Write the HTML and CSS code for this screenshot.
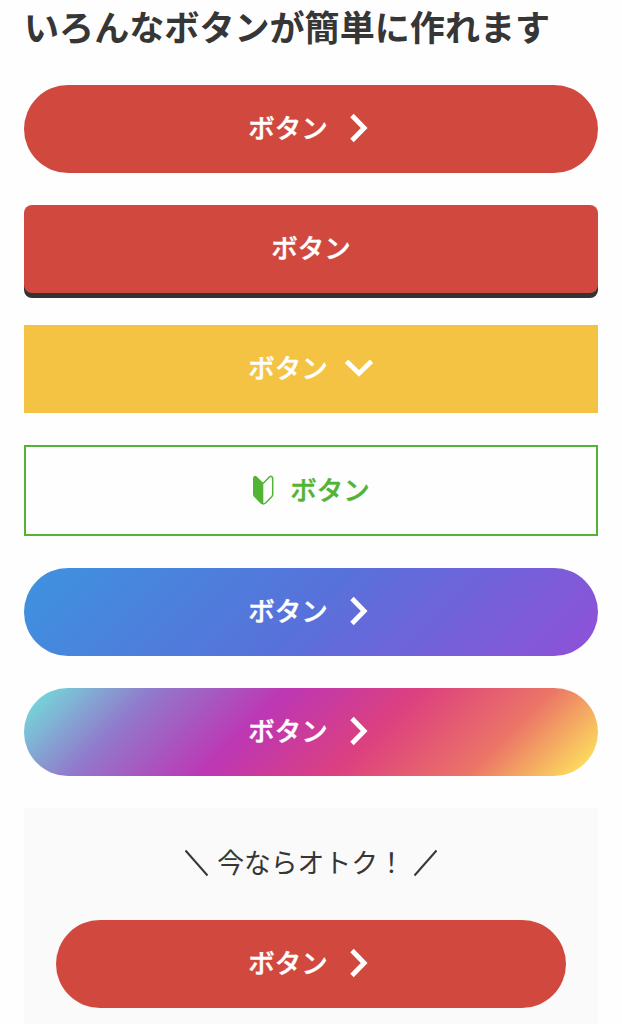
FILE: index.html
```
<!DOCTYPE html>
<html lang="ja">
<head>
    <meta charset="UTF-8">
    <meta name="viewport" content="width=device-width, initial-scale=1.0">
    <title>ボタン</title>
    <link rel="stylesheet" href="styles.css">
</head>
<body>
    <h1>いろんなボタンが簡単に作れます</h1>
    <div class="button-list">
        <a class="btn btn-red btn-round" href="#">
            <span>ボタン</span>
            <svg class="arrow" viewBox="0 0 30 30"><path d="M8 2.5 20.2 15 8 27.5"/></svg>
        </a>
        <a class="btn btn-red btn-solid" href="#"><span>ボタン</span></a>
        <a class="btn btn-yellow" href="#">
            <span>ボタン</span>
            <svg class="arrow" viewBox="0 0 30 30"><path d="M2.5 8.3 15 20.5 27.5 8.3"/></svg>
        </a>
        <a class="btn btn-outline" href="#">
            <svg class="beginner" viewBox="0 0 22 30">
                <path class="leaf" d="M11.3 8 5 1.8Q3.4.3 2 1.2 1 1.9 1 3.5V19.5Q1 20.6 1.8 21.5L8.6 28.5Q9.6 29.5 11.3 29.5Z"/>
                <path class="leaf-line" d="M11 8.5 17.4 2Q18.8.8 20 1.8 20.7 2.4 20.7 3.6V19.5Q20.7 20.6 19.9 21.5L13.6 28Q12.6 28.9 11 28.9"/>
            </svg>
            <span>ボタン</span>
        </a>
        <a class="btn btn-blue btn-round" href="#">
            <span>ボタン</span>
            <svg class="arrow" viewBox="0 0 30 30"><path d="M8 2.5 20.2 15 8 27.5"/></svg>
        </a>
        <a class="btn btn-rainbow btn-round" href="#">
            <span>ボタン</span>
            <svg class="arrow" viewBox="0 0 30 30"><path d="M8 2.5 20.2 15 8 27.5"/></svg>
        </a>
        <div class="box">
            <p class="micro-copy">
                <svg class="slash" viewBox="0 0 24 28"><path d="M.5 1.5 22.5 26.5"/></svg>
                <span>今ならオトク！</span>
                <svg class="slash" viewBox="0 0 24 28"><path d="M23.5 1.5 1.5 26.5"/></svg>
            </p>
            <a class="btn btn-red btn-round" href="#">
                <span>ボタン</span>
                <svg class="arrow" viewBox="0 0 30 30"><path d="M8 2.5 20.2 15 8 27.5"/></svg>
            </a>
        </div>
    </div>
</body>
</html>
```
FILE: styles.css
```
* {
    box-sizing: border-box;
}

body {
    font-family: "Noto Sans CJK JP", sans-serif;
    background: #fefefe;
    color: #363636;
    margin: 0;
    padding: 0 24px;
    height: 1024px;
    overflow: hidden;
}

h1 {
    font-size: 35.1px;
    font-weight: 700;
    line-height: 52px;
    margin: 0 0 33px;
    white-space: nowrap;
}

.button-list {
    display: flex;
    flex-direction: column;
    gap: 32px;
}

.btn {
    display: flex;
    align-items: center;
    justify-content: center;
    height: 88px;
    padding-bottom: 2px;
    color: #fff;
    font-size: 26.5px;
    font-weight: 500;
    line-height: 40px;
    text-decoration: none;
    -webkit-text-stroke: 0.4px currentColor;
}

.btn span {
    padding-bottom: 2px;
}

.btn-round {
    border-radius: 44px;
}

.btn-red {
    background: #d1493e;
}

.btn-solid {
    border-radius: 8px;
    box-shadow: 0 5px 0 #333;
}

.btn-yellow {
    background: #f4c343;
}

.btn-outline {
    height: 91px;
    border: 2px solid #52b435;
    color: #52b435;
}

.btn-blue {
    background: linear-gradient(135deg, #3d93df, #5871da 50%, #9150d8);
}

.btn-rainbow {
    background: linear-gradient(135deg, #70e6dc, #9179cb 20%, #bd37b4 40%, #dc407f 60%, #eb7467 80%, #fff25c);
}

.arrow {
    width: 30px;
    height: 30px;
    margin-left: 16px;
    fill: none;
    stroke: #fff;
    stroke-width: 4.8;
}

.beginner {
    width: 22px;
    height: 30px;
    margin-right: 16px;
}

.leaf {
    fill: #52b435;
}

.leaf-line {
    fill: none;
    stroke: #52b435;
    stroke-width: 1.5;
}

.box {
    background: #fafafa;
    height: 232px;
    padding: 32px 32px 0;
}

.micro-copy {
    display: flex;
    align-items: center;
    justify-content: center;
    gap: 8px;
    height: 46px;
    margin: 0 0 34px;
    font-size: 26.8px;
}

.micro-copy span {
    padding-bottom: 4px;
}

.slash {
    width: 24px;
    height: 28px;
    fill: none;
    stroke: #363636;
    stroke-width: 2;
}
```
